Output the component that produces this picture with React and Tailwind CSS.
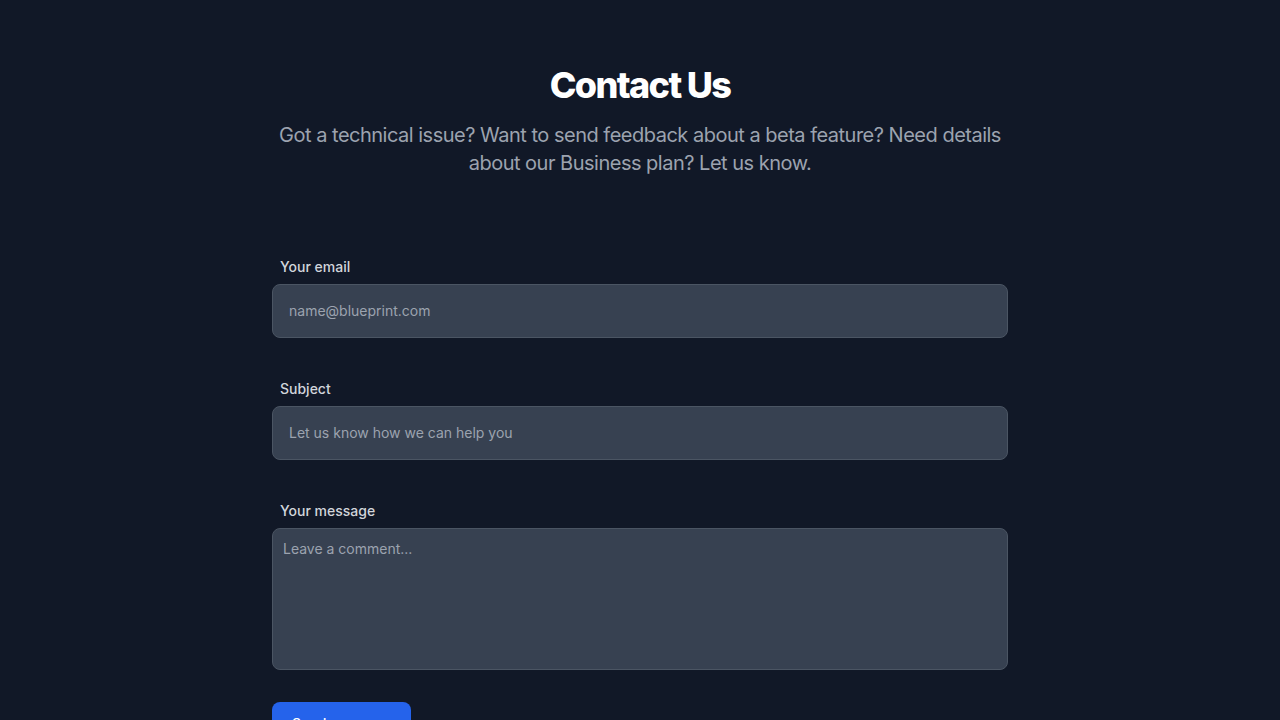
import React from "react";

export default function App() {
  return (
    <div className="min-h-screen bg-[#111827]" style={{ fontFamily: "Inter, 'Noto Sans', sans-serif" }}>
      <section className="mx-auto max-w-[768px] px-4 pt-[65px] pb-16">
        <h2 className="mb-4 text-center text-4xl font-extrabold tracking-[-0.045em] text-white">Contact Us</h2>
        <p className="mb-16 text-center text-xl font-normal tracking-[-0.5px] text-[#9ca3af]">
          Got a technical issue? Want to send feedback about a beta feature? Need details about our Business plan? Let us know.
        </p>
        <form className="flex flex-col" onSubmit={(e) => e.preventDefault()}>
          <div className="pt-[16px]">
            <label className="mb-[7px] block pl-2 text-sm font-medium text-[#d1d5db]">Your email</label>
            <input
              type="email"
              placeholder="name@blueprint.com"
              className="block w-full rounded-lg border border-[#4b5563] bg-[#374151] p-4 text-sm text-white placeholder-[#9ca3af] outline-none"
            />
          </div>
          <div className="pt-[41px]">
            <label className="mb-[7px] block pl-2 text-sm font-medium text-[#d1d5db]">Subject</label>
            <input
              type="text"
              placeholder="Let us know how we can help you"
              className="block w-full rounded-lg border border-[#4b5563] bg-[#374151] p-4 text-sm text-white placeholder-[#9ca3af] outline-none"
            />
          </div>
          <div className="pt-[41px]">
            <label className="mb-[7px] block pl-2 text-sm font-medium text-[#d1d5db]">Your message</label>
            <textarea
              rows={6}
              placeholder="Leave a comment..."
              className="block w-full resize-none rounded-lg border border-[#4b5563] bg-[#374151] p-2.5 text-sm leading-5 text-white placeholder-[#9ca3af] outline-none"
            />
          </div>
          <div className="pt-8">
            <button type="submit" className="rounded-lg bg-[#2563eb] px-5 py-3 text-sm font-medium text-white">
              Send message
            </button>
          </div>
        </form>
      </section>
    </div>
  );
}
